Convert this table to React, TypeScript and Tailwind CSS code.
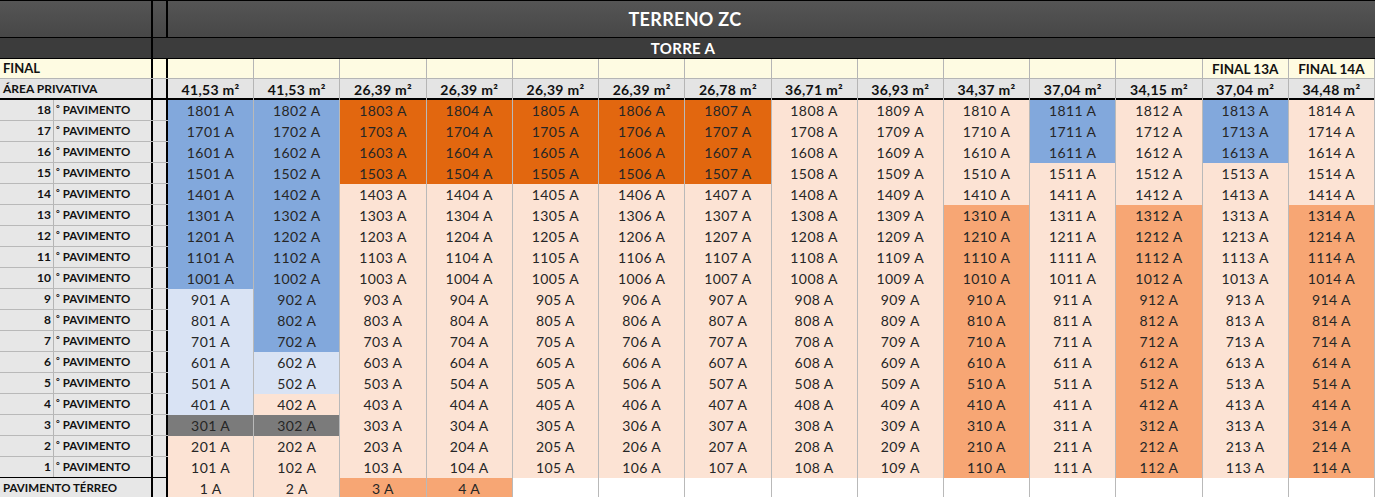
import React from 'react'

const font = { fontFamily: 'Lato, "Open Sans", sans-serif' }

const fills: Record<string, string> = {
  B: 'bg-[#82a8dc]',
  L: 'bg-[#d9e3f4]',
  O: 'bg-[#e2670f]',
  P: 'bg-[#fce3d4]',
  M: 'bg-[#f7a674]',
  G: 'bg-[#7b7b7b]',
  W: 'bg-white',
}

const areas = [
  '41,53',
  '41,53',
  '26,39',
  '26,39',
  '26,39',
  '26,39',
  '26,78',
  '36,71',
  '36,93',
  '34,37',
  '37,04',
  '34,15',
  '37,04',
  '34,48',
]

const patternFor = (floor: number) => {
  if (floor >= 16) return 'BBOOOOOPPPBPBP'
  if (floor === 15) return 'BBOOOOOPPPPPPP'
  if (floor === 14) return 'BBPPPPPPPPPPPP'
  if (floor >= 10) return 'BBPPPPPPPMPMPM'
  if (floor >= 7) return 'LBPPPPPPPMPMPM'
  if (floor >= 5) return 'LLPPPPPPPMPMPM'
  if (floor === 4) return 'LPPPPPPPPMPMPM'
  if (floor === 3) return 'GGPPPPPPPMPMPM'
  return 'PPPPPPPPPMPMPM'
}

const floors = Array.from({ length: 18 }, (_, i) => 18 - i)
const cols = Array.from({ length: 14 }, (_, i) => i + 1)

const Row = ({
  left,
  narrow = 'bg-[#e7e7e7]',
  children,
  className = '',
}: {
  left: React.ReactNode
  narrow?: string
  children: React.ReactNode
  className?: string
}) => (
  <div className={`flex ${className}`}>
    <div className="w-[153px] shrink-0 border-r-2 border-black flex">{left}</div>
    <div className={`w-[15px] shrink-0 border-r-2 border-black ${narrow}`} />
    <div className="flex-1 grid grid-cols-[repeat(14,minmax(0,1fr))]">{children}</div>
  </div>
)

export default function App() {
  return (
    <div className="w-[1375px] h-[497px] overflow-hidden bg-white text-[#262626]" style={font}>
      {/* title */}
      <div className="flex h-[38px] border-t border-b border-black bg-gradient-to-b from-[#555555] to-[#474747]">
        <div className="w-[153px] shrink-0 border-r-2 border-black" />
        <div className="w-[15px] shrink-0 border-r-2 border-black" />
        <div className="w-[1034px] flex items-center justify-center text-white font-bold text-[18px] tracking-[0.3px]">
          TERRENO ZC
        </div>
      </div>
      <div className="flex h-[21px] border-b border-black bg-[#3c3c3c]">
        <div className="w-[153px] shrink-0 border-r-2 border-black" />
        <div className="w-[1060px] flex items-center justify-center text-white font-bold text-[15px] tracking-[0.3px]">
          TORRE A
        </div>
      </div>

      {/* FINAL */}
      <Row
        className="h-[20px] bg-[#fefbe2] border-b border-[#b5b5b5]"
        narrow="bg-[#fefbe2]"
        left={<div className="pl-[3px] flex items-center font-bold text-[13px] text-[#111]">FINAL</div>}
      >
        {cols.map((c) => (
          <div
            key={c}
            className="border-r border-[#b5b5b5] flex items-center justify-center font-bold text-[13.5px] text-[#111]"
          >
            {c === 13 ? 'FINAL 13A' : c === 14 ? 'FINAL 14A' : ''}
          </div>
        ))}
      </Row>

      {/* area */}
      <Row
        className="h-[21px] bg-[#e4e4e4] border-b-2 border-black"
        narrow="bg-[#e4e4e4]"
        left={<div className="pl-[3px] flex items-center font-bold text-[12px] text-[#111]">ÁREA PRIVATIVA</div>}
      >
        {areas.map((a, i) => (
          <div
            key={i}
            className="border-r border-[#b5b5b5] flex items-center justify-center font-bold text-[14px] tracking-[0.3px] text-[#111]"
          >
            {a} m²
          </div>
        ))}
      </Row>

      {floors.map((floor) => {
        const pattern = patternFor(floor)
        return (
          <Row
            key={floor}
            className={`h-[21px] border-b ${floor === 1 ? 'border-black' : 'border-[#b9b9b9]'}`}
            left={
              <>
                <div className="w-[54px] shrink-0 bg-[#e7e7e7] border-r border-[#b5b5b5] flex items-center justify-end pr-[2px] font-bold text-[12px] text-[#111]">
                  {floor}
                </div>
                <div className="flex-1 bg-[#e7e7e7] flex items-center pl-[2px] font-bold text-[11.5px] text-[#111]">
                  <span className="text-[9px] mr-[3px] -mt-[3px]">°</span>PAVIMENTO
                </div>
              </>
            }
          >
            {cols.map((c) => (
              <div
                key={c}
                className={`border-r border-[#b9b9b9] flex items-center justify-center text-[14px] tracking-[0.4px] ${fills[pattern[c - 1]]}`}
              >
                {floor}
                {String(c).padStart(2, '0')} A
              </div>
            ))}
          </Row>
        )
      })}

      {/* terreo */}
      <Row
        className="h-[20px]"
        left={
          <div className="flex-1 bg-[#e7e7e7] pl-[3px] flex items-center font-bold text-[11.5px] text-[#111]">
            PAVIMENTO TÉRREO
          </div>
        }
      >
        {cols.map((c) => (
          <div
            key={c}
            className={`border-r border-[#b9b9b9] flex items-center justify-center text-[14px] tracking-[0.4px] ${fills['PPMMWWWWWWWWWW'[c - 1]]}`}
          >
            {c <= 4 ? `${c} A` : ''}
          </div>
        ))}
      </Row>
    </div>
  )
}
